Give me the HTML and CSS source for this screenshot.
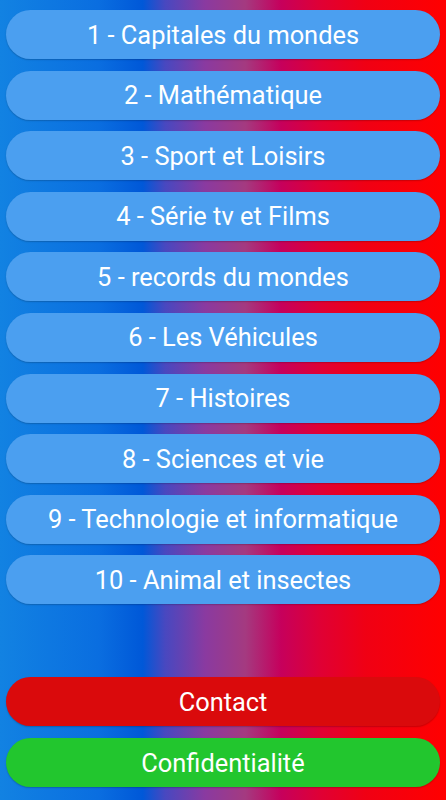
FILE: index.html
```html
<!DOCTYPE html>
<html lang="fr">
<head>
  <meta charset="UTF-8">
  <meta name="viewport" content="width=device-width, initial-scale=1.0">
  <title>Quiz</title>
  <link rel="stylesheet" href="styles.css">
</head>
<body>
  <div class="screen">
    <div class="themes">
      <button class="btn btn-theme">1 - Capitales du mondes</button>
      <button class="btn btn-theme">2 - Mathématique</button>
      <button class="btn btn-theme">3 - Sport et Loisirs</button>
      <button class="btn btn-theme">4 - Série tv et Films</button>
      <button class="btn btn-theme">5 - records du mondes</button>
      <button class="btn btn-theme">6 - Les Véhicules</button>
      <button class="btn btn-theme">7 - Histoires</button>
      <button class="btn btn-theme">8 - Sciences et vie</button>
      <button class="btn btn-theme">9 - Technologie et informatique</button>
      <button class="btn btn-theme">10 - Animal et insectes</button>
    </div>
    <div class="footer">
      <button class="btn btn-contact">Contact</button>
      <button class="btn btn-privacy">Confidentialité</button>
    </div>
  </div>
</body>
</html>
```
FILE: styles.css
```css
html, body {
  margin: 0;
  height: 100%;
}
body {
  font-family: Roboto, "Noto Sans", sans-serif;
  background: linear-gradient(to right,
    #1282e2 0%,
    #0a6ee0 22%,
    #0058d8 32%,
    #4848c0 37%,
    #8a3aa0 46%,
    #a43a80 55%,
    #c6005c 63%,
    #e00034 72%,
    #f00014 82%,
    #ff0000 100%);
}
.screen {
  box-sizing: border-box;
  height: 800px;
  padding: 10px 6px 13px 6px;
  display: flex;
  flex-direction: column;
  justify-content: space-between;
}
.themes, .footer {
  display: flex;
  flex-direction: column;
  gap: 11.6px;
}
.btn {
  height: 49px;
  border: none;
  border-radius: 25px;
  color: white;
  font-family: Roboto, "Noto Sans", sans-serif;
  font-size: 25.4px;
  font-weight: 400;
  padding: 0 10px;
  box-shadow: 0 1px 1.5px rgba(0, 0, 0, 0.2);
  cursor: pointer;
}
.btn-theme {
  background-color: #4b9ff0;
}
.btn-contact {
  background-color: #da0a0c;
}
.btn-privacy {
  background-color: #22c62e;
}
```
